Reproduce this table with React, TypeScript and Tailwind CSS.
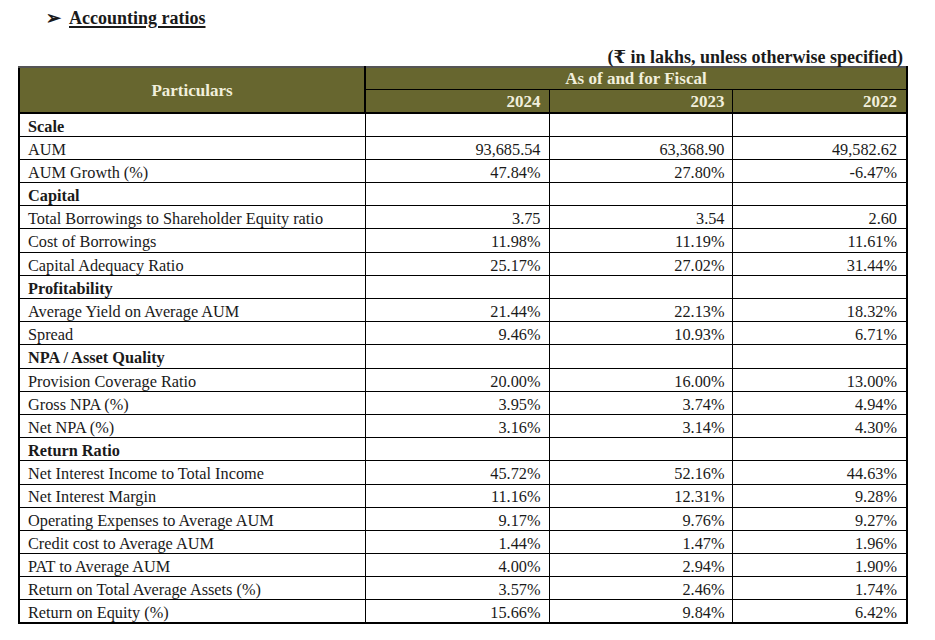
import React from "react";

type Row = { label: string; bold?: boolean; v?: [string, string, string] };

const rows: Row[] = [
  { label: "Scale", bold: true },
  { label: "AUM", v: ["93,685.54", "63,368.90", "49,582.62"] },
  { label: "AUM Growth (%)", v: ["47.84%", "27.80%", "-6.47%"] },
  { label: "Capital", bold: true },
  { label: "Total Borrowings to Shareholder Equity ratio", v: ["3.75", "3.54", "2.60"] },
  { label: "Cost of Borrowings", v: ["11.98%", "11.19%", "11.61%"] },
  { label: "Capital Adequacy Ratio", v: ["25.17%", "27.02%", "31.44%"] },
  { label: "Profitability", bold: true },
  { label: "Average Yield on Average AUM", v: ["21.44%", "22.13%", "18.32%"] },
  { label: "Spread", v: ["9.46%", "10.93%", "6.71%"] },
  { label: "NPA / Asset Quality", bold: true },
  { label: "Provision Coverage Ratio", v: ["20.00%", "16.00%", "13.00%"] },
  { label: "Gross NPA (%)", v: ["3.95%", "3.74%", "4.94%"] },
  { label: "Net NPA (%)", v: ["3.16%", "3.14%", "4.30%"] },
  { label: "Return Ratio", bold: true },
  { label: "Net Interest Income to Total Income", v: ["45.72%", "52.16%", "44.63%"] },
  { label: "Net Interest Margin", v: ["11.16%", "12.31%", "9.28%"] },
  { label: "Operating Expenses to Average AUM", v: ["9.17%", "9.76%", "9.27%"] },
  { label: "Credit cost to Average AUM", v: ["1.44%", "1.47%", "1.96%"] },
  { label: "PAT to Average AUM", v: ["4.00%", "2.94%", "1.90%"] },
  { label: "Return on Total Average Assets (%)", v: ["3.57%", "2.46%", "1.74%"] },
  { label: "Return on Equity (%)", v: ["15.66%", "9.84%", "6.42%"] },
];

export default function App() {
  return (
    <div
      className="w-[935px] h-[640px] bg-white text-[#1a1a1a] overflow-hidden"
      style={{ fontFamily: '"Liberation Serif", "DejaVu Serif", serif' }}
    >
      <div className="pt-[4px] pl-[46px] flex items-center gap-[8px] text-[18px] font-bold leading-[28px]">
        <span className="text-[18px]">➢</span>
        <span className="underline decoration-[1.5px] underline-offset-[2px]">Accounting ratios</span>
      </div>
      <div className="mt-[14px] h-[20px] w-[906px] text-right text-[18px] font-bold leading-[22px] pr-[3px]">
        (₹ in lakhs, unless otherwise specified)
      </div>
      <table className="ml-[18px] w-[888px] border-collapse table-fixed text-[16.3px] leading-none">
        <colgroup>
          <col className="w-[346px]" />
          <col className="w-[184px]" />
          <col className="w-[183px]" />
          <col className="w-[175px]" />
        </colgroup>
        <thead className="bg-[#67662f] text-[#f1efdc] font-bold text-[17px]">
          <tr className="h-[22px]">
            <th
              rowSpan={2}
              className="border-2 border-black border-t-[#555] text-center align-middle font-bold"
            >
              Particulars
            </th>
            <th colSpan={3} className="border-2 border-black border-b border-t-[#555] text-center font-bold pt-[1px]">
              As of and for Fiscal
            </th>
          </tr>
          <tr className="h-[24px]">
            <th className="border border-black border-b-2 text-right pr-[8px] pt-[2px] font-bold">2024</th>
            <th className="border border-black border-b-2 text-right pr-[7px] pt-[2px] font-bold">2023</th>
            <th className="border border-black border-b-2 border-r-2 text-right pr-[9px] pt-[2px] font-bold">2022</th>
          </tr>
        </thead>
        <tbody>
          {rows.map((r, i) => (
            <tr key={i} className="h-[23.2px]">
              <td
                className={`border border-black border-l-2 pl-[8px] pt-[4px] ${r.bold ? "font-bold" : ""} ${
                  i === rows.length - 1 ? "border-b-2" : ""
                }`}
              >
                {r.label}
              </td>
              <td className={`border border-black text-right pr-[8px] pt-[4px] ${i === rows.length - 1 ? "border-b-2" : ""}`}>
                {r.v ? r.v[0] : ""}
              </td>
              <td className={`border border-black text-right pr-[7px] pt-[4px] ${i === rows.length - 1 ? "border-b-2" : ""}`}>
                {r.v ? r.v[1] : ""}
              </td>
              <td
                className={`border border-black border-r-2 text-right pr-[9px] pt-[4px] ${
                  i === rows.length - 1 ? "border-b-2" : ""
                }`}
              >
                {r.v ? r.v[2] : ""}
              </td>
            </tr>
          ))}
        </tbody>
      </table>
    </div>
  );
}
